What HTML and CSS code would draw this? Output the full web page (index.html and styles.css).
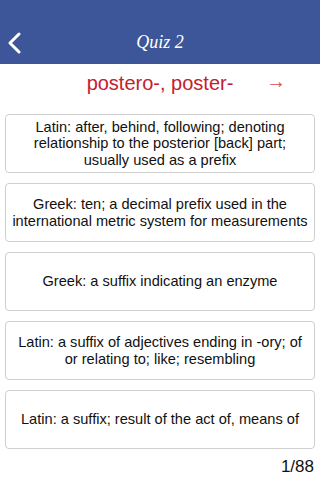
FILE: index.html
```html
<!DOCTYPE html>
<html lang="en">
<head>
  <meta charset="UTF-8" />
  <meta name="viewport" content="width=device-width, initial-scale=1.0"/>
  <title>Quiz 2</title>
  <link rel="stylesheet" href="styles.css">
</head>
<body>
  <div class="topbar">
    <button class="back" aria-label="Back">
      <svg width="16" height="22" viewBox="0 0 16 22">
        <path d="M13 2 L4 11 L13 20" fill="none" stroke="#fff" stroke-width="3" stroke-linecap="round" stroke-linejoin="round"/>
      </svg>
    </button>
    <h1>Quiz 2</h1>
  </div>

  <div class="question">
    <span class="term">postero-, poster-</span>
    <span class="next">&rarr;</span>
  </div>

  <div class="answers">
    <div class="answer">Latin: after, behind, following; denoting relationship to the posterior [back] part; usually used as a prefix</div>
    <div class="answer">Greek: ten; a decimal prefix used in the international metric system for measurements</div>
    <div class="answer">Greek: a suffix indicating an enzyme</div>
    <div class="answer">Latin: a suffix of adjectives ending in -ory; of or relating to; like; resembling</div>
    <div class="answer">Latin: a suffix; result of the act of, means of</div>
  </div>

  <div class="counter">1/88</div>
</body>
</html>
```

FILE: styles.css
```css
body {
  font-family: "Liberation Sans", Arial, sans-serif;
  margin: 0;
  background: #fff;
  color: #111;
  width: 320px;
  height: 480px;
  overflow: hidden;
}

.topbar {
  position: relative;
  height: 64px;
  background: #3d5699;
  display: flex;
  align-items: center;
  justify-content: center;
  padding-top: 20px;
  box-sizing: border-box;
}

.topbar h1 {
  margin: 0;
  font-family: "Liberation Serif", "Times New Roman", serif;
  font-style: italic;
  font-weight: normal;
  font-size: 18px;
  color: #fff;
}

.back {
  position: absolute;
  left: 6px;
  top: 32px;
  background: none;
  border: none;
  padding: 0;
  width: 16px;
  height: 22px;
}

.question {
  position: relative;
  height: 38px;
  display: flex;
  align-items: center;
  justify-content: center;
}

.term {
  font-size: 20px;
  color: #c4202f;
}

.next {
  position: absolute;
  right: 34px;
  top: 6px;
  font-size: 20px;
  color: #d94a55;
}

.answers {
  display: flex;
  flex-direction: column;
  gap: 10px;
  padding: 12px 5px 0;
}

.answer {
  height: 59px;
  box-sizing: border-box;
  border: 1px solid #cfcfcf;
  border-radius: 4px;
  display: flex;
  align-items: center;
  justify-content: center;
  text-align: center;
  font-size: 14.6px;
  line-height: 16.5px;
  padding: 0 4px;
}

.counter {
  text-align: right;
  font-size: 17px;
  padding: 8px 6px 0 0;
}
```
